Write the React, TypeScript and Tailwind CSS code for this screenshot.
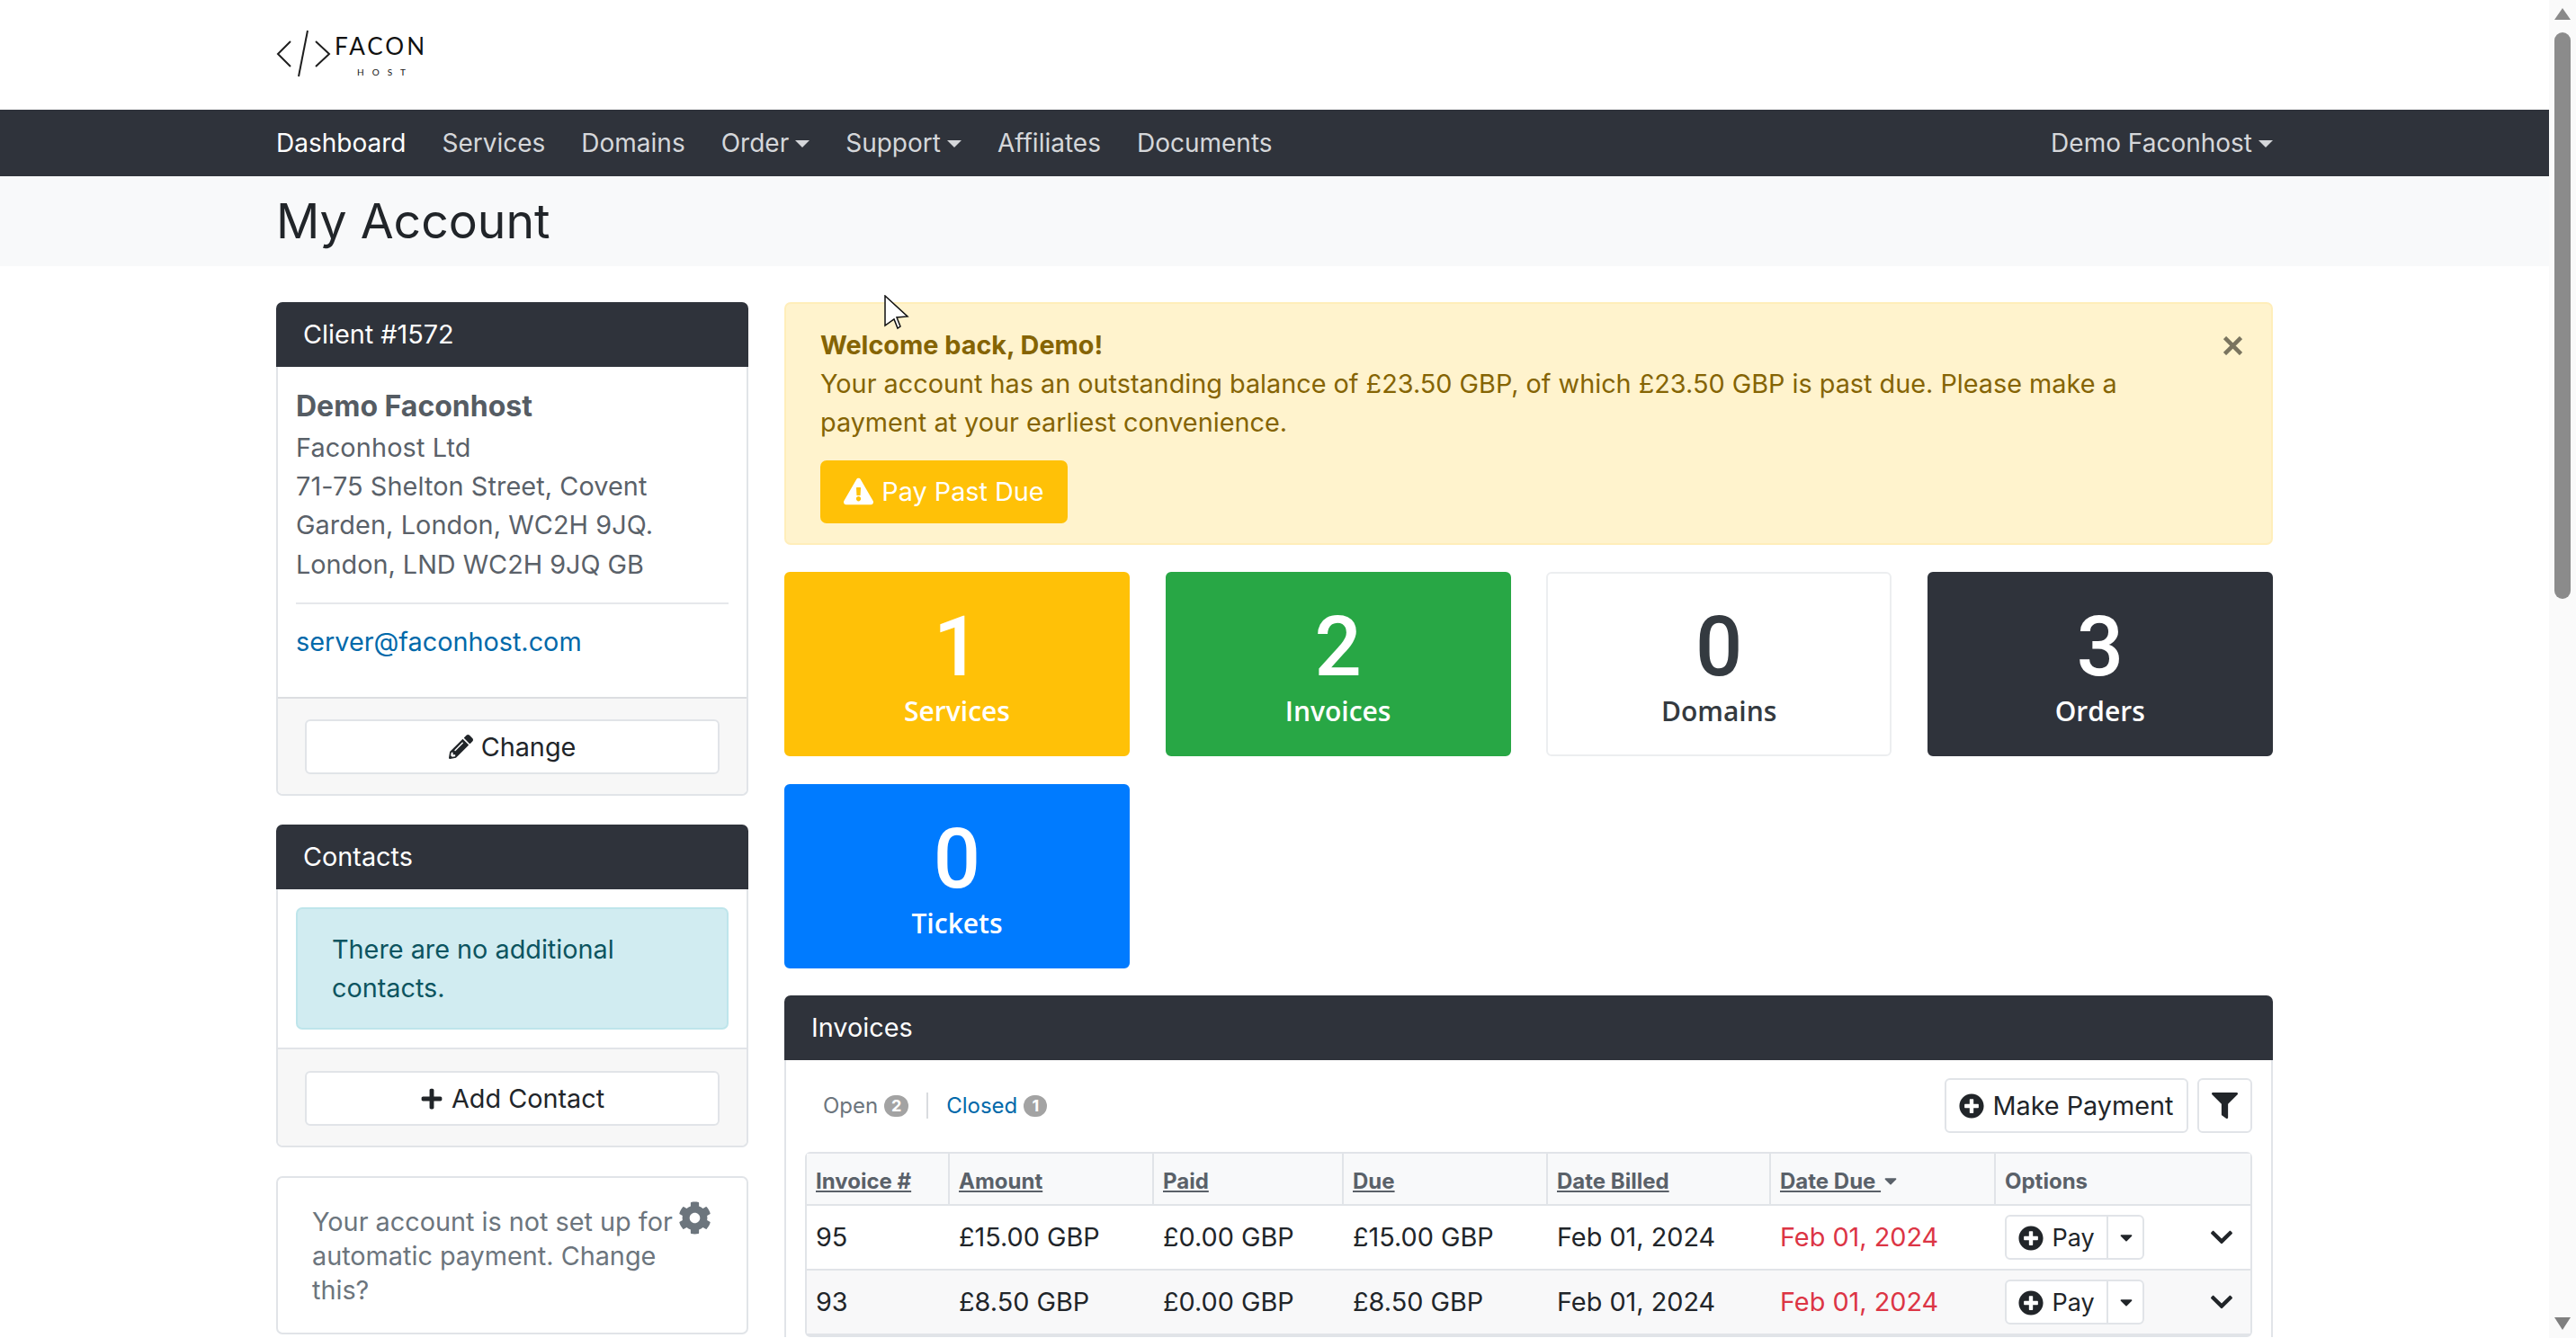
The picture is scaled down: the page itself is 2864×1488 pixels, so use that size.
import { useState } from "react";
import {
  FaCaretDown,
  FaChevronDown,
  FaCog,
  FaExclamationTriangle,
  FaFilter,
  FaPencilAlt,
  FaPlus,
  FaPlusCircle,
} from "react-icons/fa";

const navItems = [
  { label: "Dashboard", active: true },
  { label: "Services" },
  { label: "Domains" },
  { label: "Order", caret: true },
  { label: "Support", caret: true },
  { label: "Affiliates" },
  { label: "Documents" },
];

const invoices = [
  { id: "95", amount: "£15.00 GBP", paid: "£0.00 GBP", due: "£15.00 GBP", billed: "Feb 01, 2024", dueDate: "Feb 01, 2024" },
  { id: "93", amount: "£8.50 GBP", paid: "£0.00 GBP", due: "£8.50 GBP", billed: "Feb 01, 2024", dueDate: "Feb 01, 2024" },
];

function Caret() {
  return (
    <span className="ml-[7px] inline-block h-0 w-0 border-x-[8px] border-t-[8px] border-x-transparent border-t-current align-[5px]" />
  );
}

function Logo() {
  return (
    <div className="flex items-start">
      <svg width="62" height="54" viewBox="0 0 62 54" className="mt-[33px] shrink-0" fill="none" stroke="#1f1f1f" strokeWidth="2">
        <path d="M16 13 L2 27 L16 41" />
        <path d="M35 1 L25 52" />
        <path d="M44 13 L59 27 L44 41" />
      </svg>
      <div className="ml-[3px] mt-[36px] flex flex-col items-center font-['Lato',sans-serif] text-[#111]">
        <span className="text-[26px] leading-[30px] tracking-[3px]">FACON</span>
        <span className="mt-[8px] ml-[10px] text-[10px] leading-[12px] tracking-[9px]">HOST</span>
      </div>
    </div>
  );
}

function CardHeader({ title }: { title: string }) {
  return (
    <div className="h-[72px] rounded-t-[7px] bg-[#2f333b] px-[30px] text-[28.8px] leading-[72px] text-white">
      {title}
    </div>
  );
}

function OutlineButton({ icon, label }: { icon: React.ReactNode; label: string }) {
  return (
    <button className="flex h-[61px] w-full items-center justify-center gap-[9px] rounded-[6px] border-2 border-[#e1e4e8] bg-white text-[28.8px] text-[#212529]">
      {icon}
      {label}
    </button>
  );
}

function StatBox({ value, label, className }: { value: string; label: string; className: string }) {
  return (
    <div className={`flex h-[205px] w-[384px] flex-col items-center rounded-[6px] border-2 font-['Open_Sans',sans-serif] ${className}`}>
      <span className="mt-[32px] font-['Roboto',sans-serif] text-[92px] font-medium leading-[100px]">{value}</span>
      <span className="text-[30px] font-semibold leading-[42px]">{label}</span>
    </div>
  );
}

function Scrollbar() {
  return (
    <div className="flex h-full w-[30px] shrink-0 flex-col items-center bg-[#fafafa] pt-[9px]">
      <div className="h-0 w-0 border-x-[9px] border-b-[13px] border-x-transparent border-b-[#8a8a8a]" />
      <div className="mt-[14px] h-[630px] w-[18px] rounded-full bg-[#8b8b8b]" />
      <div className="mt-auto mb-[9px] h-0 w-0 border-x-[9px] border-t-[14px] border-x-transparent border-t-[#7f7f7f]" />
    </div>
  );
}

export default function App() {
  const [showAlert, setShowAlert] = useState(true);

  return (
    <div className="relative flex h-[1488px] w-[2864px] overflow-hidden bg-white font-['Inter',sans-serif] text-[28.8px] leading-[43.2px] text-[#212529]">
      <div className="min-w-0 flex-1 overflow-hidden">
        <header className="h-[122px] pl-[307px]">
          <Logo />
        </header>

        <nav className="flex h-[74px] items-center justify-between bg-[#2f333b] pt-[2px] pr-[307px] pl-[307px] text-[28px]">
          <ul className="flex gap-[40px]">
            {navItems.map((item) => (
              <li key={item.label} className={item.active ? "text-white" : "text-[#d5d7da]"}>
                {item.label}
                {item.caret && <Caret />}
              </li>
            ))}
          </ul>
          <div className="text-[#d5d7da]">
            Demo Faconhost
            <Caret />
          </div>
        </nav>

        <div className="h-[100px] bg-[#f8f9fa] px-[307px] text-[53.5px] leading-[100px] text-[#212529]">
          My Account
        </div>

        <main className="flex gap-[40px] pl-[307px] pt-[40px]">
          <aside className="flex w-[525px] shrink-0 flex-col gap-[32px]">
            <section>
              <CardHeader title="Client #1572" />
              <div className="rounded-b-[7px] border-2 border-t-0 border-[#e1e4e8]">
                <div className="px-[20px] pt-[20px] pb-[40px] text-[#5a6169]">
                  <div className="text-[32px] leading-[48px] font-bold text-[#555c63]">Demo Faconhost</div>
                  <div className="tracking-[0.15px]">Faconhost Ltd</div>
                  <div className="tracking-[0.1px]">71-75 Shelton Street, Covent Garden, London, WC2H 9JQ.</div>
                  <div>London, LND WC2H 9JQ GB</div>
                  <div className="mt-[21px] mb-[20px] h-[2px] bg-[#e6e8eb]" />
                  <a className="text-[#0069aa]">server@faconhost.com</a>
                </div>
                <div className="rounded-b-[6px] border-t-2 border-[#dcdee1] bg-[#f7f7f7] px-[30px] pt-[23px] pb-[22px]">
                  <OutlineButton icon={<FaPencilAlt size={27} />} label="Change" />
                </div>
              </div>
            </section>

            <section>
              <CardHeader title="Contacts" />
              <div className="rounded-b-[7px] border-2 border-t-0 border-[#e1e4e8]">
                <div className="p-[20px]">
                  <div className="rounded-[7px] border-2 border-[#bee5eb] bg-[#d1ecf1] px-[38px] py-[23px] text-[#0c5460]">
                    There are no additional contacts.
                  </div>
                </div>
                <div className="rounded-b-[6px] border-t-2 border-[#e1e4e8] bg-[#f7f7f7] px-[30px] pt-[24px] pb-[22px]">
                  <OutlineButton icon={<FaPlus size={26} />} label="Add Contact" />
                </div>
              </div>
            </section>

            <section className="relative h-[176px] rounded-[7px] border-2 border-[#e1e4e8] px-[38px] pt-[30px] leading-[38px] text-[#6c757d]">
              Your account is not set up for automatic payment. Change this?
              <FaCog size={37} className="absolute top-[26px] right-[39px] text-[#6c757d]" />
            </section>
          </aside>

          <div className="w-[1655px] shrink-0">
            {showAlert && (
              <div className="relative h-[270px] rounded-[7px] border-2 border-[#ffeeba] bg-[#fff3cd] pt-[24px] pr-[120px] pl-[38px] text-[#856404]">
                <div className="font-bold">Welcome back, Demo!</div>
                <div>
                  Your account has an outstanding balance of £23.50 GBP, of which £23.50 GBP is past due. Please make a
                  payment at your earliest convenience.
                </div>
                <button className="mt-[20px] flex h-[70px] w-[275px] items-center justify-center gap-[9px] rounded-[7px] bg-[#ffc107] text-white">
                  <FaExclamationTriangle size={33} />
                  Pay Past Due
                </button>
                <button
                  onClick={() => setShowAlert(false)}
                  className="absolute top-[36px] right-[32px] text-[#7a745f]"
                  aria-label="Close"
                >
                  <svg width="21" height="21" viewBox="0 0 21 21" stroke="currentColor" strokeWidth="4.5">
                    <path d="M1.5 1.5 L19.5 19.5 M19.5 1.5 L1.5 19.5" />
                  </svg>
                </button>
              </div>
            )}

            <div className="mt-[30px] flex flex-wrap gap-x-[39.6px] gap-y-[31px]">
              <StatBox value="1" label="Services" className="border-[#ffc107] bg-[#ffc107] text-white" />
              <StatBox value="2" label="Invoices" className="border-[#28a745] bg-[#28a745] text-white" />
              <StatBox value="0" label="Domains" className="border-[#eceef0] text-[#343a40]" />
              <StatBox value="3" label="Orders" className="border-[#2f333b] bg-[#2f333b] text-white" />
              <StatBox value="0" label="Tickets" className="border-[#007bff] bg-[#007bff] text-white" />
            </div>

            <section className="mt-[30px]">
              <CardHeader title="Invoices" />
              <div className="border-x-2 border-[#e1e4e8] px-[21px] pt-[20px]">
                <div className="flex items-center justify-between">
                  <div className="flex items-center pl-[20px] text-[24px] leading-[38px]">
                    <span className="text-[#6c757d]">Open</span>
                    <span className="ml-[7px] flex h-[24px] w-[27px] items-center justify-center rounded-full bg-[#a3a3a3] text-[18px] font-bold text-white">
                      2
                    </span>
                    <span className="mx-[20px] h-[29px] w-[2px] bg-[#d9dcdf]" />
                    <span className="text-[#0069aa]">Closed</span>
                    <span className="ml-[7px] flex h-[24px] w-[26px] items-center justify-center rounded-full bg-[#a3a3a3] text-[18px] font-bold text-white">
                      1
                    </span>
                  </div>
                  <div className="flex gap-[10px]">
                    <button className="flex h-[61px] w-[271px] items-center justify-center gap-[9px] rounded-[6px] border-2 border-[#e1e4e8]">
                      <FaPlusCircle size={28} />
                      Make Payment
                    </button>
                    <button className="flex h-[61px] w-[61px] items-center justify-center rounded-[6px] border-2 border-[#e1e4e8]">
                      <FaFilter size={29} />
                    </button>
                  </div>
                </div>

                <table className="mt-[21px] w-full table-fixed border-separate border-spacing-0 rounded-[6px] border-2 border-[#e1e4e8]">
                  <colgroup>
                    <col className="w-[159px]" />
                    <col className="w-[227px]" />
                    <col className="w-[211px]" />
                    <col className="w-[227px]" />
                    <col className="w-[248px]" />
                    <col className="w-[250px]" />
                    <col />
                  </colgroup>
                  <thead>
                    <tr className="h-[58px] bg-[#f8f9fa] text-left text-[24px] text-[#5a6169]">
                      {["Invoice #", "Amount", "Paid", "Due", "Date Billed"].map((h) => (
                        <th key={h} className="border-r-2 border-b-2 border-[#e1e4e8] pt-[5px] pl-[10px] font-bold">
                          <span className="underline">{h}</span>
                        </th>
                      ))}
                      <th className="border-r-2 border-b-2 border-[#e1e4e8] pt-[5px] pl-[10px] font-bold">
                        <span className="underline">
                          Date Due <FaCaretDown size={22} className="inline align-[-2px]" />
                        </span>
                      </th>
                      <th colSpan={2} className="border-b-2 border-[#e1e4e8] pt-[5px] pl-[10px] font-bold">
                        Options
                      </th>
                    </tr>
                  </thead>
                  <tbody>
                    {invoices.map((inv, i) => (
                      <tr key={inv.id} className={i % 2 === 1 ? "h-[72px] bg-[#f8f8f9]" : "h-[72px]"}>
                        <td className="border-b-2 border-[#e1e4e8] pl-[10px]">{inv.id}</td>
                        <td className="border-b-2 border-[#e1e4e8] pl-[10px]">{inv.amount}</td>
                        <td className="border-b-2 border-[#e1e4e8] pl-[10px]">{inv.paid}</td>
                        <td className="border-b-2 border-[#e1e4e8] pl-[10px]">{inv.due}</td>
                        <td className="border-b-2 border-[#e1e4e8] pl-[10px]">{inv.billed}</td>
                        <td className="border-b-2 border-[#e1e4e8] pl-[10px] text-[#dc3545]">{inv.dueDate}</td>
                        <td colSpan={2} className="border-b-2 border-[#e1e4e8] pl-[10px]">
                          <div className="flex items-center justify-between pr-[18px]">
                            <div className="flex h-[50px] w-[155px] items-center rounded-[6px] border-2 border-[#e1e4e8] bg-white text-[27px]">
                              <div className="flex h-full w-[113px] items-center justify-center gap-[9px] border-r-2 border-[#e1e4e8] pt-[2px]">
                                <FaPlusCircle size={28} />
                                Pay
                              </div>
                              <FaCaretDown size={22} className="ml-[9px]" />
                            </div>
                            <FaChevronDown size={28} />
                          </div>
                        </td>
                      </tr>
                    ))}
                  </tbody>
                </table>
              </div>
            </section>
          </div>
        </main>
      </div>

      <Scrollbar />

      <svg width="28" height="40" viewBox="0 0 28 40" className="absolute top-[328px] left-[983px]" fill="#fff" stroke="#111" strokeWidth="1.5">
        <path d="M1 1 L1 34 L11 27 L15 37 L18 35 L14 25 L26 24 Z" />
      </svg>
    </div>
  );
}
